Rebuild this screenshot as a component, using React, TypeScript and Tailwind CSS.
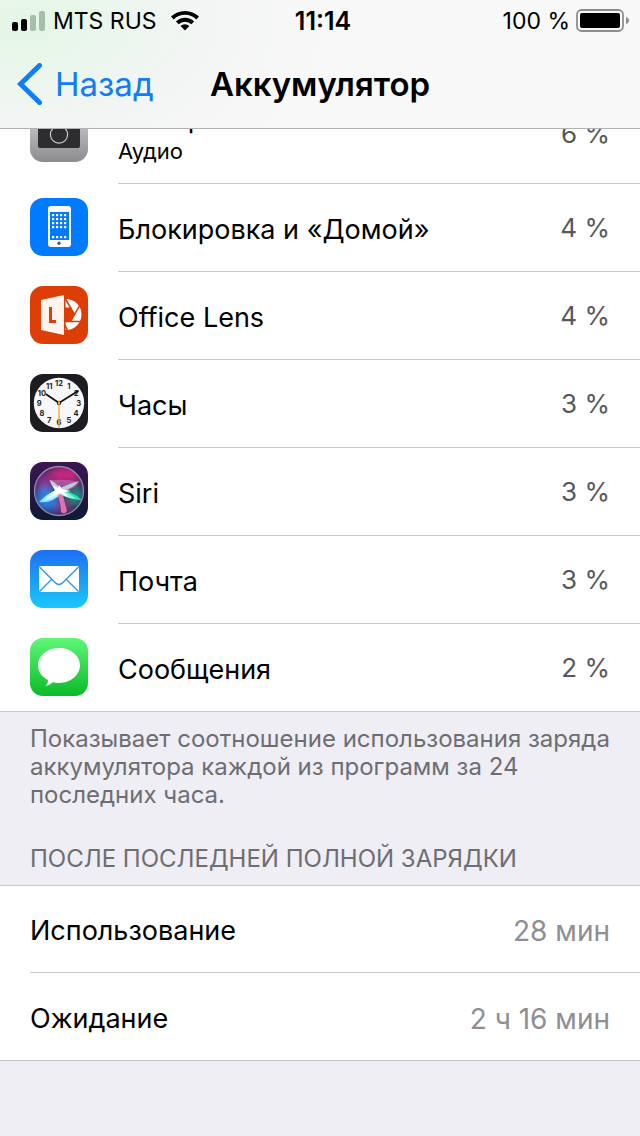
import type { ReactNode } from "react";

const tile = "block size-[58px] shrink-0";

function CameraIcon() {
  return (
    <svg viewBox="0 0 58 58" className={tile} aria-hidden="true">
      <defs>
        <linearGradient id="cam" x1="0" y1="0" x2="0" y2="1">
          <stop offset="0" stopColor="#dcdcde" />
          <stop offset="1" stopColor="#8b8b90" />
        </linearGradient>
      </defs>
      <rect width="58" height="58" rx="13" fill="url(#cam)" />
      <path d="M8 18h12l3-5h12l3 5h12v24q0 2-2 2H10q-2 0-2-2z" fill="#2d2d30" />
      <circle cx="29" cy="30.500" r="8.600" fill="none" stroke="#c9c9cc" strokeWidth="1.200" />
    </svg>
  );
}

function HomeIcon() {
  const cols = [22, 26, 30, 34];
  const rows = [16, 20, 24, 28, 38];
  return (
    <svg viewBox="0 0 58 58" className={tile} aria-hidden="true">
      <rect width="58" height="58" rx="13" fill="#007aff" />
      <rect x="18" y="8" width="23" height="41" rx="3" fill="#fff" />
      <rect x="20" y="14" width="19" height="28" fill="#007aff" />
      {rows.map((y) =>
        cols.map((x) => <rect key={`${x}-${y}`} x={x} y={y} width="2.2" height="2.2" fill="#fff" />),
      )}
      <circle cx="29" cy="45.2" r="1.7" fill="#3f5f8c" />
    </svg>
  );
}

function LensIcon() {
  return (
    <svg viewBox="0 0 58 58" className={tile} aria-hidden="true">
      <rect width="58" height="58" rx="13" fill="#dc3e05" />
      <circle cx="36" cy="28.5" r="15.500" fill="#fff" />
      <path d="M44.5 28.5L40.5 35.4h-8l-4-6.900 4-6.900h8z" fill="#dc3e05" />
      <path
        d="M32.500 35.400H51.500M40.500 35.400L49.800 19.400M44.500 28.500L35.500 13M28.500 28.500L37.500 44"
        fill="none"
        stroke="#dc3e05"
        strokeWidth="1.500"
      />
      <path d="M35.500 8v42H9V8z" fill="#dc3e05" />
      <path d="M11 14l23-5v40l-23-5z" fill="#fff4ee" />
      <path d="M20.500 21v14.500H26" fill="none" stroke="#dc3e05" strokeWidth="3" />
    </svg>
  );
}

function ClockIcon() {
  const hours = [1, 2, 3, 4, 5, 6, 7, 8, 9, 10, 11, 12];
  return (
    <svg viewBox="0 0 58 58" className={tile} aria-hidden="true">
      <rect width="58" height="58" rx="13" fill="#1d1d21" />
      <circle cx="29" cy="29" r="25.2" fill="#f8f8fb" />
      {hours.map((h) => {
        const a = (h * Math.PI) / 6;
        return (
          <text
            key={h}
            x={29 + 19.7 * Math.sin(a)}
            y={31.7 - 19.7 * Math.cos(a)}
            textAnchor="middle"
            fontSize="7.5"
            fontWeight="700"
            fill="#222"
          >
            {h}
          </text>
        );
      })}
      <path d="M16.5 20.5L29 29L48 17" fill="none" stroke="#111" strokeWidth="1.8" strokeLinecap="round" />
      <circle cx="29" cy="29" r="2.2" fill="#111" />
      <path d="M29 27v27" stroke="#f5a623" strokeWidth="1.3" />
      <circle cx="29" cy="29" r="1.3" fill="#f5a623" />
    </svg>
  );
}

function SiriIcon() {
  return (
    <svg viewBox="0 0 58 58" className={tile} aria-hidden="true">
      <defs>
        <linearGradient id="siri-bg" x1="0" y1="0" x2="0" y2="1">
          <stop offset="0" stopColor="#3b1553" />
          <stop offset="1" stopColor="#0d1a34" />
        </linearGradient>
        <clipPath id="siri-orb">
          <circle cx="29" cy="29" r="24" />
        </clipPath>
        <filter id="siri-soft" x="-50%" y="-50%" width="200%" height="200%">
          <feGaussianBlur stdDeviation="4" />
        </filter>
        <filter id="siri-glow" x="-30%" y="-30%" width="160%" height="160%">
          <feGaussianBlur stdDeviation="0.5" />
        </filter>
      </defs>
      <rect width="58" height="58" rx="13" fill="url(#siri-bg)" />
      <g clipPath="url(#siri-orb)">
        <circle cx="29" cy="29" r="25" fill="#33265c" />
        <g filter="url(#siri-soft)">
          <ellipse cx="35" cy="13" rx="17" ry="9" fill="#c9287f" />
          <ellipse cx="13" cy="20" rx="7" ry="9" fill="#8b2f92" />
          <ellipse cx="17" cy="37" rx="12" ry="12" fill="#2382e6" />
          <ellipse cx="46" cy="34" rx="8" ry="9" fill="#1a9a8a" />
          <ellipse cx="33" cy="46" rx="7" ry="8" fill="#7a2f78" />
        </g>
        <g filter="url(#siri-glow)">
          <path d="M29 30Q14 17 22 18Q37 17 49 20Q45 28 29 30z" fill="#d27cc4" opacity=".5" />
          <path d="M29 27Q40 28 52 38Q39 38 28 31z" fill="#35dfae" />
          <path d="M28 27Q16 32 9 40Q22 42 32 31z" fill="#8fdcff" />
          <path d="M26 29Q31 40 31 50Q35 53 37 49Q34 38 32 29z" fill="#f078ae" opacity=".9" />
          <path d="M30 26Q25 20 20 18Q22 26 26 28Q16 33 13 39Q24 38 30 32Q37 36 46 37Q38 31 34 29Q43 26 49 19Q38 22 30 26z" fill="#c8fbfb" opacity=".7" />
          <path d="M29 23l3 4 9 2-7 1 4 5-8-4-13 6 8-8-2-6 5 3z" fill="#fff" />
        </g>
      </g>
      <circle cx="29" cy="29" r="24.5" fill="none" stroke="#a5a0bd" strokeWidth="1.4" opacity=".8" />
    </svg>
  );
}

function MailIcon() {
  return (
    <svg viewBox="0 0 58 58" className={tile} aria-hidden="true">
      <defs>
        <linearGradient id="mail" x1="0" y1="0" x2="0" y2="1">
          <stop offset="0" stopColor="#1d6ff2" />
          <stop offset="1" stopColor="#1ac8fc" />
        </linearGradient>
      </defs>
      <rect width="58" height="58" rx="13" fill="url(#mail)" />
      <rect x="9" y="16" width="40" height="26" rx="1.5" fill="#fff" />
      <path d="M9.5 17l15.500 15.500q4 4 8 0L48.500 17M9.500 41.500l12-12M48.500 41.500l-12-12" fill="none" stroke="#2d93e8" strokeWidth="1.3" />
    </svg>
  );
}

function MessagesIcon() {
  return (
    <svg viewBox="0 0 58 58" className={tile} aria-hidden="true">
      <defs>
        <linearGradient id="msg" x1="0" y1="0" x2="0" y2="1">
          <stop offset="0" stopColor="#5ff777" />
          <stop offset="1" stopColor="#0abb27" />
        </linearGradient>
      </defs>
      <rect width="58" height="58" rx="13" fill="url(#msg)" />
      <path d="M29 10c11.700 0 21 7.700 21 17.300S40.700 45 29 45c-2.200 0-4.300-.3-6.200-.8-2 1.900-4.200 3.300-7.300 3.600 1.700-1.500 2.400-3.400 2.400-5.800C11.800 39 8 33.600 8 27.300 8 17.700 17.300 10 29 10z" fill="#fff" />
    </svg>
  );
}

type App = { name: string; share: string; icon: ReactNode };

const apps: App[] = [
  { name: "Блокировка и «Домой»", share: "4 %", icon: <HomeIcon /> },
  { name: "Office Lens", share: "4 %", icon: <LensIcon /> },
  { name: "Часы", share: "3 %", icon: <ClockIcon /> },
  { name: "Siri", share: "3 %", icon: <SiriIcon /> },
  { name: "Почта", share: "3 %", icon: <MailIcon /> },
  { name: "Сообщения", share: "2 %", icon: <MessagesIcon /> },
];

const totals = [
  { label: "Использование", value: "28 мин" },
  { label: "Ожидание", value: "2 ч 16 мин" },
];

function AppRow({ app, last }: { app: App; last: boolean }) {
  return (
    <li className={`flex gap-[30px] pl-[30px] ${last ? "h-[87px]" : "h-[88px]"}`}>
      <div className="pt-3.5">{app.icon}</div>
      <div className={`flex flex-1 items-center justify-between pr-[30px] ${last ? "" : "border-b border-[#c8c7cc]"}`}>
        <div className="pt-1 text-[27px] leading-8">{app.name}</div>
        <div className="text-[26px] leading-8 text-[#58585b]">{app.share}</div>
      </div>
    </li>
  );
}

function CameraRow() {
  return (
    <li className="flex h-[55px] items-end overflow-hidden">
      <div className="flex h-[100px] w-full shrink-0 gap-[30px] pl-[30px]">
        <div className="pt-5">
          <CameraIcon />
        </div>
        <div className="flex flex-1 items-center justify-between border-b border-[#c8c7cc] pr-[30px]">
          <div className="pt-0.5">
            <div className="text-[27px] leading-8">Камера</div>
            <div className="text-[22px] leading-8">Аудио</div>
          </div>
          <div className="text-[26px] leading-8 text-[#58585b]">6 %</div>
        </div>
      </div>
    </li>
  );
}

function StatusBar() {
  return (
    <div className="grid h-10 grid-cols-[1fr_auto_1fr] items-center pt-0.5 text-[23px] leading-7">
      <div className="flex items-center gap-2 pl-3">
        <svg viewBox="0 0 33 20" className="h-5 w-[33px]" aria-hidden="true">
          <rect x="0" y="11" width="6" height="9" rx="2" />
          <rect x="9" y="8" width="6" height="12" rx="2" />
          <rect x="18" y="4" width="6" height="16" rx="2" fill="#a9bdad" />
          <rect x="27" y="0" width="6" height="20" rx="2" fill="#a9bdad" />
        </svg>
        <span>MTS RUS</span>
        <svg viewBox="0 0 28 20" className="ml-1.5 h-5 w-7" aria-hidden="true">
          <path d="M14 0C8.600 0 3.700 2.100 0 5.600L2.700 8.400A16.200 16.200 0 0 1 25.300 8.400L28 5.600C24.300 2.100 19.400 0 14 0z" />
          <path d="M14 6.700c-3.500 0-6.700 1.400-9.100 3.700l2.800 2.800a9 9 0 0 1 12.600 0l2.800-2.800A13 13 0 0 0 14 6.700z" />
          <path d="M14 13.200c-1.700 0-3.200.7-4.400 1.800L14 19.600l4.400-4.600a6.300 6.300 0 0 0-4.400-1.800z" />
        </svg>
      </div>
      <time className="pl-1.5 text-[25px] font-semibold">11:14</time>
      <div className="flex items-center justify-end gap-1.5 pr-[11px]">
        <span>100 %</span>
        <svg viewBox="0 0 53 24" className="h-6 w-[53px]" aria-hidden="true">
          <rect x="1" y="1" width="46" height="21" rx="4.500" fill="none" stroke="#8d8d8f" strokeWidth="1.800" />
          <rect x="4" y="4" width="40" height="15" rx="2" />
          <path d="M50 8q3 1 3 3.500T50 15z" fill="#8d8d8f" />
        </svg>
      </div>
    </div>
  );
}

export default function App() {
  return (
    <div className="min-h-screen bg-[#efeef4] font-['Inter','Liberation_Sans',sans-serif] text-black">
      <header className="border-b border-[#b2b2b2] bg-[#f8f8f8] bg-[radial-gradient(ellipse_300px_170px_at_25px_25px,#e3f7e6,#f3f5f4_60%,#f8f8f8)]">
        <StatusBar />
        <div className="grid h-[88px] grid-cols-[1fr_auto_1fr] items-center">
          <button type="button" className="flex items-center gap-3 pl-[17px] text-left text-[33px] leading-10 text-[#0f7cf8]">
            <svg viewBox="0 0 26 42" className="h-[42px] w-[26px]" aria-hidden="true">
              <path d="M22.500 2.500L3.500 21l19 18.500" fill="none" stroke="currentColor" strokeWidth="5" strokeLinecap="round" strokeLinejoin="miter" />
            </svg>
            Назад
          </button>
          <h1 className="text-[33px] leading-10 font-semibold">Аккумулятор</h1>
        </div>
      </header>

      <main>
        <ul className="border-b border-[#c8c7cc] bg-white">
          <CameraRow />
          {apps.map((app, i) => (
            <AppRow key={app.name} app={app} last={i === apps.length - 1} />
          ))}
        </ul>

        <p className="pt-[13px] pr-5 pl-[30px] text-[24px] leading-7 text-[#6d6d72]">
          Показывает соотношение использования заряда аккумулятора каждой из программ за 24 последних часа.
        </p>
        <h2 className="px-[30px] pt-9 pb-3 text-[24px] leading-7 text-[#6d6d72]">ПОСЛЕ ПОСЛЕДНЕЙ ПОЛНОЙ ЗАРЯДКИ</h2>

        <dl className="border-y border-[#c8c7cc] bg-white">
          {totals.map((row, i) => (
            <div key={row.label} className="pl-[30px]">
              <div className={`flex h-[87px] items-center justify-between pt-1 pr-[30px] text-[27px] leading-8 ${i === 0 ? "border-b border-[#c8c7cc]" : ""}`}>
                <dt>{row.label}</dt>
                <dd className="text-[28px] text-[#8e8e93]">{row.value}</dd>
              </div>
            </div>
          ))}
        </dl>
      </main>
    </div>
  );
}
